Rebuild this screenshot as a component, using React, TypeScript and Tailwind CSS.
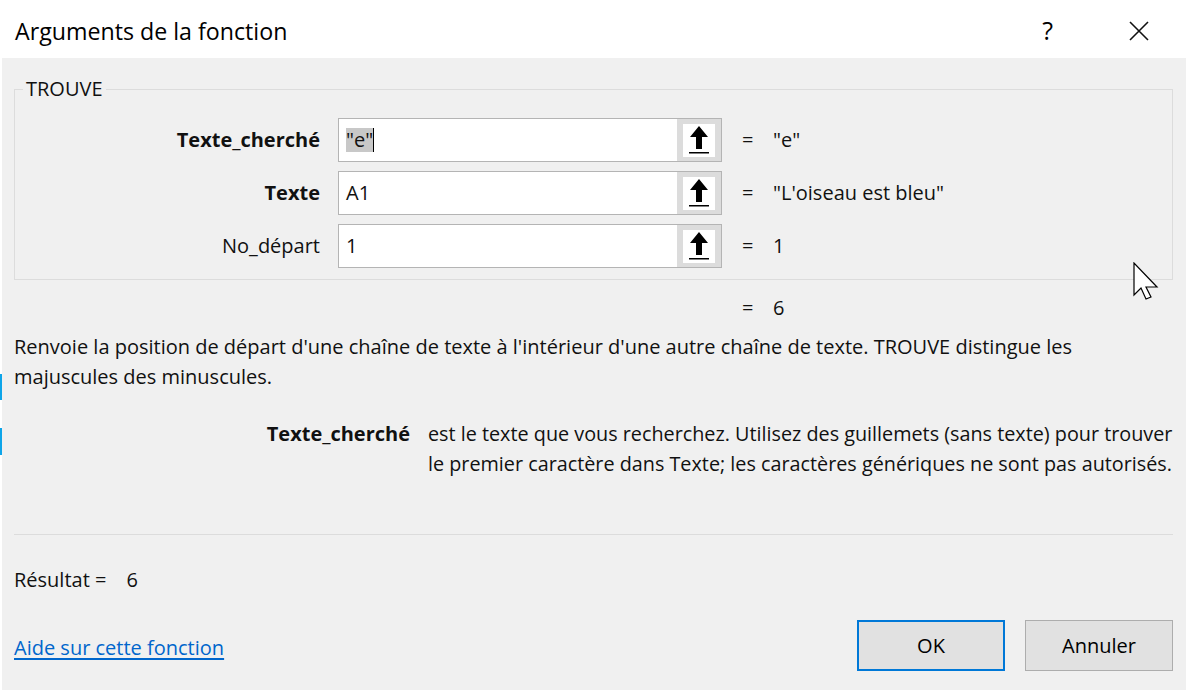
import React from 'react'

const font = { fontFamily: '"Open Sans", "Noto Sans", "Liberation Sans", sans-serif' }

function RefIcon() {
  return (
    <svg width="22" height="30" viewBox="0 0 22 30">
      <polygon points="11,1 20,12 14,12 14,24 8,24 8,12 2,12" fill="#000" />
      <rect x="1" y="27" width="20" height="1.5" fill="#000" />
    </svg>
  )
}

function ArgRow({ label, bold, value, result, selected }: { label: string; bold?: boolean; value: string; result: string; selected?: boolean }) {
  return (
    <div className="flex items-center h-[44px]">
      <div className={`w-[305px] text-right mr-[18px] ${bold ? 'font-bold' : ''}`}>{label}</div>
      <div className="w-[384px] h-[44px] flex border border-[#b4b4b4] bg-white">
        <div className="flex-1 flex items-center pl-[7px]">
          {selected ? (
            <>
              <span className="bg-[#c8c8c8] leading-[24px]">{value}</span>
              <span className="w-px h-[24px] bg-black" />
            </>
          ) : (
            <span>{value}</span>
          )}
        </div>
        <div className="w-[44px] h-full bg-[#dcdcdc] flex items-center justify-center">
          <div className="w-[32px] h-[33px] bg-white flex items-center justify-center">
            <RefIcon />
          </div>
        </div>
      </div>
      <div className="ml-[20px] w-[31px]">=</div>
      <div>{result}</div>
    </div>
  )
}

export default function App() {
  return (
    <div className="relative w-[1188px] h-[690px] bg-white overflow-hidden text-[20px] text-[#111]" style={font}>
      <div className="absolute left-0 top-[374px] w-[2px] h-[26px] bg-[#0ea5e9]" />
      <div className="absolute left-0 top-[428px] w-[2px] h-[27px] bg-[#0ea5e9]" />

      <div className="ml-[2px] mt-[2px] w-[1184px] h-[688px] bg-[#f0f0f0] flex flex-col">
        {/* title bar */}
        <div className="h-[56px] bg-white flex items-center pl-[13px] pt-[2px] shrink-0">
          <div className="flex-1 text-[23.2px] text-black">Arguments de la fonction</div>
          <div className="text-[25px] text-black mr-[76px]">?</div>
          <svg width="20" height="20" viewBox="0 0 20 20" className="mr-[37px]">
            <path d="M1 1 L19 19 M19 1 L1 19" stroke="#111" strokeWidth="1.6" />
          </svg>
        </div>

        <div className="px-[12px] flex flex-col">
          <fieldset className="mt-[18px] w-[1159px] border border-[#dcdcdc] pt-[16px] pb-[11px]">
            <legend className="ml-[8px] px-[3px] text-[20px] leading-[26px]">TROUVE</legend>
            <div className="flex flex-col gap-[9px]">
              <ArgRow label="Texte_cherché" bold value={'"e"'} result={'"e"'} selected />
              <ArgRow label="Texte" bold value="A1" result={'"L\'oiseau est bleu"'} />
              <ArgRow label="No_départ" value="1" result="1" />
            </div>
          </fieldset>

          <div className="mt-[13px] flex leading-[30px]">
            <div className="ml-[728px] w-[31px]">=</div>
            <div>6</div>
          </div>

          <div className="mt-[9px] leading-[30px] whitespace-nowrap">
            Renvoie la position de départ d'une chaîne de texte à l'intérieur d'une autre chaîne de texte. TROUVE distingue les
            <br />
            majuscules des minuscules.
          </div>

          <div className="mt-[27px] flex leading-[30px]">
            <div className="w-[396px] text-right font-bold shrink-0">Texte_cherché</div>
            <div className="ml-[18px] whitespace-nowrap text-[19.8px]">
              est le texte que vous recherchez. Utilisez des guillemets (sans texte) pour trouver
              <br />
              le premier caractère dans Texte; les caractères génériques ne sont pas autorisés.
            </div>
          </div>

          <div className="mt-[55px] w-[1159px] h-px bg-[#dcdcdc]" />

          <div className="mt-[30px] flex leading-[30px]">
            <span>Résultat =</span>
            <span className="ml-[20px]">6</span>
          </div>

          <div className="mt-[25px] flex items-center w-[1159px]">
            <a className="flex-1 text-[#0066cc] underline underline-offset-[3px] pt-[4px]">Aide sur cette fonction</a>
            <button className="w-[148px] h-[51px] bg-[#e1e1e1] border-2 border-[#0078d7] text-black">OK</button>
            <button className="ml-[20px] w-[148px] h-[51px] bg-[#e1e1e1] border border-[#adadad] text-black">Annuler</button>
          </div>
        </div>
      </div>

      {/* mouse pointer */}
      <svg className="absolute left-[1133px] top-[262px]" width="28" height="40" viewBox="0 0 28 40">
        <path d="M1 1 L1 33 L8 26 L13 37 L18 35 L13 25 L24 25 Z" fill="#fff" stroke="#000" strokeWidth="1.2" strokeLinejoin="miter" />
      </svg>
    </div>
  )
}
